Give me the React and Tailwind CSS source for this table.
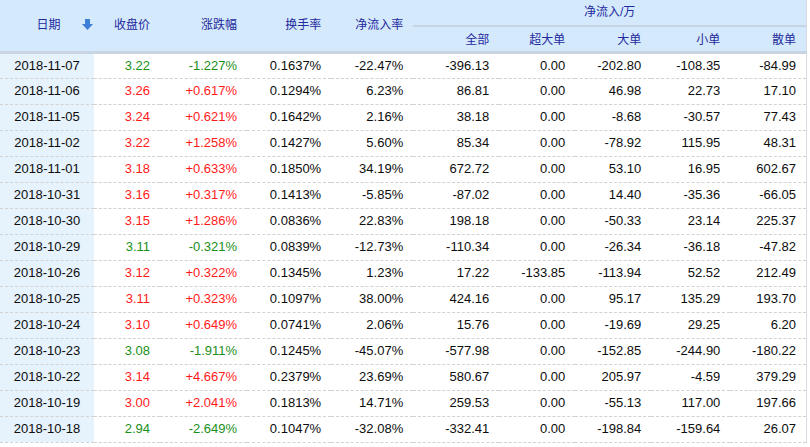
const rows = [
  ["2018-11-07", "3.22", "-1.227%", "0.1637%", "-22.47%", "-396.13", "0.00", "-202.80", "-108.35", "-84.99"],
  ["2018-11-06", "3.26", "+0.617%", "0.1294%", "6.23%", "86.81", "0.00", "46.98", "22.73", "17.10"],
  ["2018-11-05", "3.24", "+0.621%", "0.1642%", "2.16%", "38.18", "0.00", "-8.68", "-30.57", "77.43"],
  ["2018-11-02", "3.22", "+1.258%", "0.1427%", "5.60%", "85.34", "0.00", "-78.92", "115.95", "48.31"],
  ["2018-11-01", "3.18", "+0.633%", "0.1850%", "34.19%", "672.72", "0.00", "53.10", "16.95", "602.67"],
  ["2018-10-31", "3.16", "+0.317%", "0.1413%", "-5.85%", "-87.02", "0.00", "14.40", "-35.36", "-66.05"],
  ["2018-10-30", "3.15", "+1.286%", "0.0836%", "22.83%", "198.18", "0.00", "-50.33", "23.14", "225.37"],
  ["2018-10-29", "3.11", "-0.321%", "0.0839%", "-12.73%", "-110.34", "0.00", "-26.34", "-36.18", "-47.82"],
  ["2018-10-26", "3.12", "+0.322%", "0.1345%", "1.23%", "17.22", "-133.85", "-113.94", "52.52", "212.49"],
  ["2018-10-25", "3.11", "+0.323%", "0.1097%", "38.00%", "424.16", "0.00", "95.17", "135.29", "193.70"],
  ["2018-10-24", "3.10", "+0.649%", "0.0741%", "2.06%", "15.76", "0.00", "-19.69", "29.25", "6.20"],
  ["2018-10-23", "3.08", "-1.911%", "0.1245%", "-45.07%", "-577.98", "0.00", "-152.85", "-244.90", "-180.22"],
  ["2018-10-22", "3.14", "+4.667%", "0.2379%", "23.69%", "580.67", "0.00", "205.97", "-4.59", "379.29"],
  ["2018-10-19", "3.00", "+2.041%", "0.1813%", "14.71%", "259.53", "0.00", "-55.13", "117.00", "197.66"],
  ["2018-10-18", "2.94", "-2.649%", "0.1047%", "-32.08%", "-332.41", "0.00", "-198.84", "-159.64", "26.07"],
];

const widths = [94, 66, 87, 84, 82, 86, 76, 76, 79, 76];

const SortArrow = () => (
  <svg width="11" height="11" viewBox="0 0 11 11" className="block">
    <rect x="3" y="0" width="5" height="5" fill="#3d7fd6" />
    <polygon points="0,5 11,5 5.5,11" fill="#3d7fd6" />
  </svg>
);

export default function App() {
  const head = "text-[12px] font-normal text-[#1f2a9e] bg-[#d4e9fb] pr-[10px] text-right";
  return (
    <div className="w-[810px] h-[447px] bg-white overflow-hidden" style={{ fontFamily: '"Liberation Sans", "Noto Sans CJK SC", sans-serif' }}>
      <table className="table-fixed border-collapse w-[807px] border-r border-[#d8dde3]">
        <colgroup>
          {widths.map((w, i) => (
            <col key={i} style={{ width: w }} />
          ))}
        </colgroup>
        <thead>
          <tr className="h-[26px]">
            <th rowSpan={2} className="relative text-[12px] font-normal text-[#1f2a9e] bg-[#d4e9fb] text-center border-b-[3px] border-[#c8d4e2]">
              <span className="pl-[3px]">日期</span>
              <span className="absolute right-[1px] top-[19px]"><SortArrow /></span>
            </th>
            <th rowSpan={2} className={`${head} border-b-[3px] border-[#c8d4e2]`}>收盘价</th>
            <th rowSpan={2} className={`${head} border-b-[3px] border-[#c8d4e2]`}>涨跌幅</th>
            <th rowSpan={2} className={`${head} border-b-[3px] border-[#c8d4e2]`}>换手率</th>
            <th rowSpan={2} className={`${head} border-b-[3px] border-[#c8d4e2]`}>净流入率</th>
            <th colSpan={5} className="text-[12px] font-normal text-[#1f2a9e] bg-[#d4e9fb] text-center border-b-2 border-[#c8d4e2] pb-[1px]">净流入/万</th>
          </tr>
          <tr className="h-[26px]">
            {["全部", "超大单", "大单", "小单", "散单"].map((h) => (
              <th key={h} className={`${head} border-b-[3px] border-[#c8d4e2] pt-[2px]`}>{h}</th>
            ))}
          </tr>
        </thead>
        <tbody className="text-[13px] text-[#0d0d0d]">
          {rows.map((r) => {
            const up = r[2].startsWith("+");
            const tone = up ? "text-[#ff1a1a]" : "text-[#1a8f1a]";
            return (
              <tr key={r[0]} className="h-[26px] border-b border-dashed border-[#d2d2d2]">
                <td className="bg-[#e6f2fc] text-center">{r[0]}</td>
                <td className={`text-right pr-[10px] ${tone}`}>{r[1]}</td>
                <td className={`text-right pr-[10px] ${tone}`}>{r[2]}</td>
                {r.slice(3).map((v, i) => (
                  <td key={i} className="text-right pr-[10px]">{v}</td>
                ))}
              </tr>
            );
          })}
        </tbody>
      </table>
    </div>
  );
}
